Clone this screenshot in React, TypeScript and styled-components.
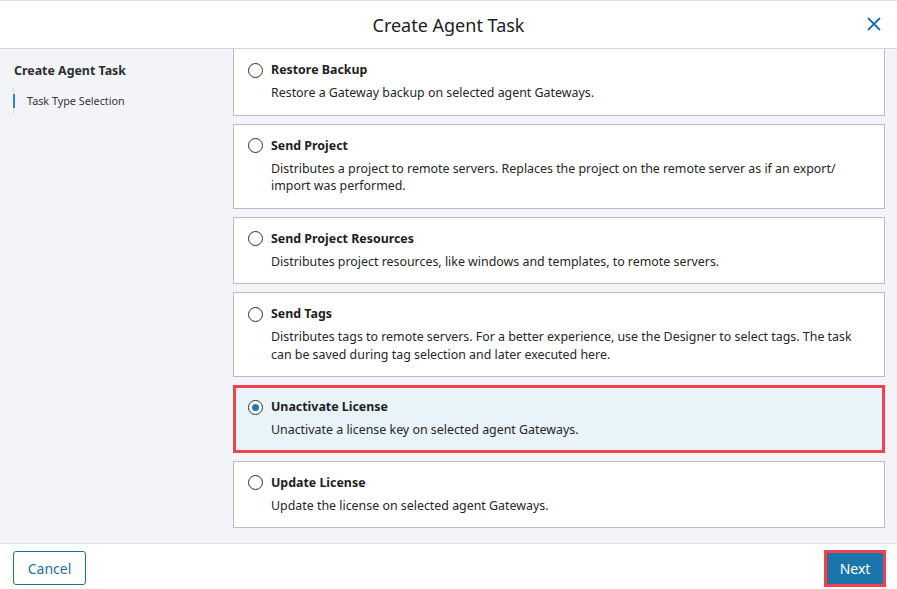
import React, { useState } from "react";
import styled, { createGlobalStyle } from "styled-components";

const GlobalStyle = createGlobalStyle`
  html, body {
    margin: 0;
    padding: 0;
    background: #fff;
  }
  body {
    font-family: "Noto Sans", "Open Sans", "Liberation Sans", sans-serif;
    color: #2b2b2b;
  }
  * {
    box-sizing: border-box;
  }
`;

const Modal = styled.div`
  width: 897px;
  height: 589px;
  display: flex;
  flex-direction: column;
  border-top: 1px solid #dfe1e6;
  background: #fff;
  overflow: hidden;
`;

const Header = styled.div`
  height: 48px;
  flex: none;
  display: flex;
  align-items: center;
  justify-content: center;
  position: relative;
  border-bottom: 1px solid #d3d6dc;
`;

const Title = styled.h1`
  margin: 0;
  font-size: 18px;
  font-weight: 400;
  color: #222;
`;

const CloseButton = styled.button`
  position: absolute;
  right: 12px;
  top: 12px;
  width: 22px;
  height: 22px;
  padding: 0;
  border: none;
  background: transparent;
  display: flex;
  align-items: center;
  justify-content: center;
  cursor: pointer;
`;

const Body = styled.div`
  flex: 1;
  display: flex;
  min-height: 0;
  background: #f3f4f7;
`;

const Sidebar = styled.div`
  width: 233px;
  flex: none;
  padding: 13px 14px;
`;

const SideTitle = styled.div`
  font-size: 12.4px;
  font-weight: 700;
  line-height: 18px;
  color: #2e2e2e;
`;

const StepList = styled.div`
  margin-top: 8px;
  border-left: 1px solid #d3d6dc;
  padding: 6px 0;
  margin-left: -1px;
`;

const Step = styled.div<{ $active?: boolean }>`
  font-size: 10.8px;
  line-height: 14px;
  color: #333;
  padding-left: 12px;
  margin-left: -1px;
  border-left: 2px solid ${p => (p.$active ? "#2b88cc" : "transparent")};
`;

const TaskList = styled.div`
  flex: 1;
  display: flex;
  flex-direction: column;
  gap: 8px;
  padding: 0 12px 0 0;
  overflow: hidden;
`;

const Card = styled.label<{ $selected?: boolean }>`
  display: block;
  flex: none;
  background: ${p => (p.$selected ? "#e8f3fa" : "#fff")};
  border: ${p => (p.$selected ? "3px solid #f2424a" : "1px solid #b9bcc3")};
  padding: ${p => (p.$selected ? "10px 14px 11px 12px" : "12px 16px 13px 14px")};
  cursor: pointer;

  &:first-child {
    border-top: none;
    padding-top: 12px;
  }
`;

const CardHead = styled.div`
  display: flex;
  align-items: center;
  gap: 8px;
`;

const Radio = styled.span<{ $checked?: boolean }>`
  width: 15px;
  height: 15px;
  flex: none;
  border-radius: 50%;
  border: 1.5px solid #2d2d2d;
  background: #fff;
  display: flex;
  align-items: center;
  justify-content: center;

  &::after {
    content: "";
    width: 7px;
    height: 7px;
    border-radius: 50%;
    background: ${p => (p.$checked ? "#1f78b4" : "transparent")};
  }
`;

const CardTitle = styled.span`
  font-size: 12.4px;
  font-weight: 700;
  line-height: 18px;
  color: #1e1e1e;
`;

const CardDesc = styled.div`
  margin: 5px 0 0 23px;
  font-size: 12.4px;
  line-height: 17.5px;
  color: #262626;
`;

const Footer = styled.div`
  height: 46px;
  flex: none;
  display: flex;
  align-items: center;
  justify-content: space-between;
  padding: 3px 11px 0 13px;
  border-top: 1px solid #dfe1e6;
`;

const OutlineButton = styled.button`
  width: 73px;
  height: 34px;
  border: 1px solid #1b6fa8;
  border-radius: 3px;
  background: #fff;
  color: #1b6fa8;
  font-family: inherit;
  font-size: 14px;
  cursor: pointer;
`;

const PrimaryButton = styled.button`
  width: 62px;
  height: 37px;
  border: 3px solid #f2424a;
  background: #1b75ad;
  color: #fff;
  font-family: inherit;
  font-size: 14px;
  cursor: pointer;
`;

interface Task {
  id: string;
  title: string;
  desc: string;
}

const tasks: Task[] = [
  {
    id: "restore",
    title: "Restore Backup",
    desc: "Restore a Gateway backup on selected agent Gateways."
  },
  {
    id: "project",
    title: "Send Project",
    desc:
      "Distributes a project to remote servers. Replaces the project on the remote server as if an export/ import was performed."
  },
  {
    id: "resources",
    title: "Send Project Resources",
    desc: "Distributes project resources, like windows and templates, to remote servers."
  },
  {
    id: "tags",
    title: "Send Tags",
    desc:
      "Distributes tags to remote servers. For a better experience, use the Designer to select tags. The task can be saved during tag selection and later executed here."
  },
  {
    id: "unactivate",
    title: "Unactivate License",
    desc: "Unactivate a license key on selected agent Gateways."
  },
  {
    id: "update",
    title: "Update License",
    desc: "Update the license on selected agent Gateways."
  }
];

export default function App() {
  const [selected, setSelected] = useState("unactivate");

  return (
    <>
      <GlobalStyle />
      <Modal>
        <Header>
          <Title>Create Agent Task</Title>
          <CloseButton aria-label="Close">
            <svg width="14" height="14" viewBox="0 0 14 14">
              <path d="M1 1 L13 13 M13 1 L1 13" stroke="#1b6fa8" strokeWidth="1.8" fill="none" />
            </svg>
          </CloseButton>
        </Header>
        <Body>
          <Sidebar>
            <SideTitle>Create Agent Task</SideTitle>
            <StepList>
              <Step $active>Task Type Selection</Step>
            </StepList>
          </Sidebar>
          <TaskList>
            {tasks.map(t => (
              <Card key={t.id} $selected={selected === t.id} onClick={() => setSelected(t.id)}>
                <CardHead>
                  <Radio $checked={selected === t.id} />
                  <CardTitle>{t.title}</CardTitle>
                </CardHead>
                <CardDesc>{t.desc}</CardDesc>
              </Card>
            ))}
          </TaskList>
        </Body>
        <Footer>
          <OutlineButton>Cancel</OutlineButton>
          <PrimaryButton>Next</PrimaryButton>
        </Footer>
      </Modal>
    </>
  );
}
